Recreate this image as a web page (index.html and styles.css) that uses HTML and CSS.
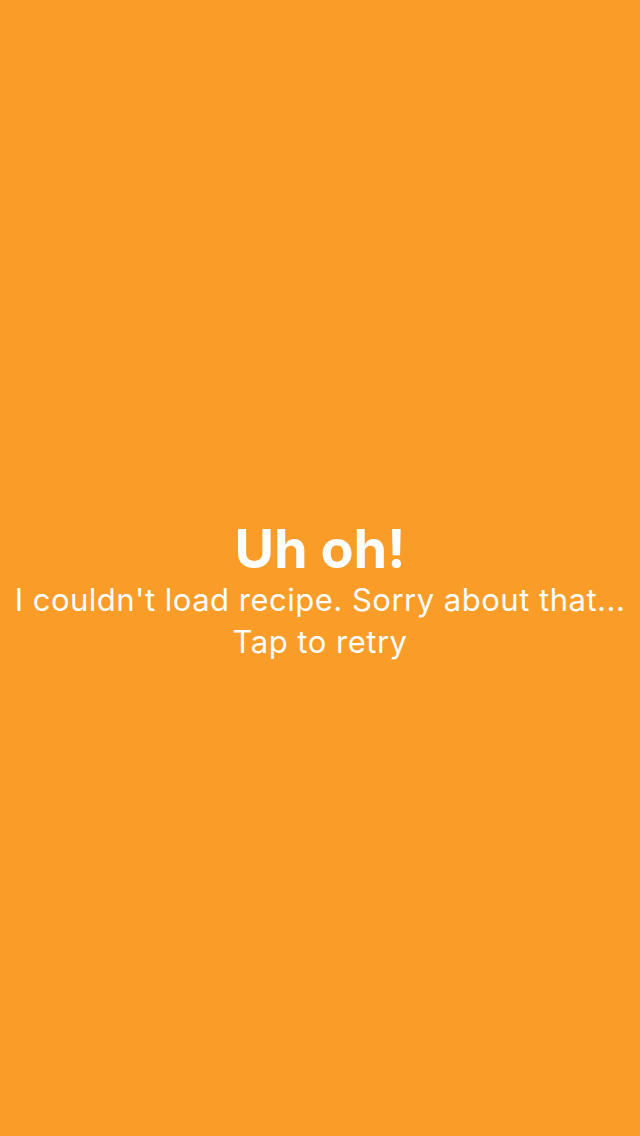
FILE: index.html
```html
<!DOCTYPE html>
<html>
<head>
<meta charset="utf-8">
<link rel="stylesheet" href="styles.css">
</head>
<body>
<main class="screen">
  <div class="message">
    <h1 class="title">Uh oh!</h1>
    <p class="text">I couldn't load recipe. Sorry about that...</p>
    <p class="text">Tap to retry</p>
  </div>
</main>
</body>
</html>
```
FILE: styles.css
```css
html, body {
  margin: 0;
  padding: 0;
  height: 100%;
}
body {
  background: #F99C28;
  font-family: Inter, "Noto Sans", sans-serif;
  color: #ffffff;
}
.screen {
  height: 1136px;
  display: flex;
  align-items: center;
  justify-content: center;
}
.message {
  text-align: center;
  margin-top: 46px;
}
.title {
  margin: 0;
  font-size: 54px;
  font-weight: 700;
  line-height: 60px;
  letter-spacing: 0;
}
.text {
  margin: 0;
  font-size: 31px;
  font-weight: 400;
  line-height: 42px;
  letter-spacing: 0.5px;
}
```
